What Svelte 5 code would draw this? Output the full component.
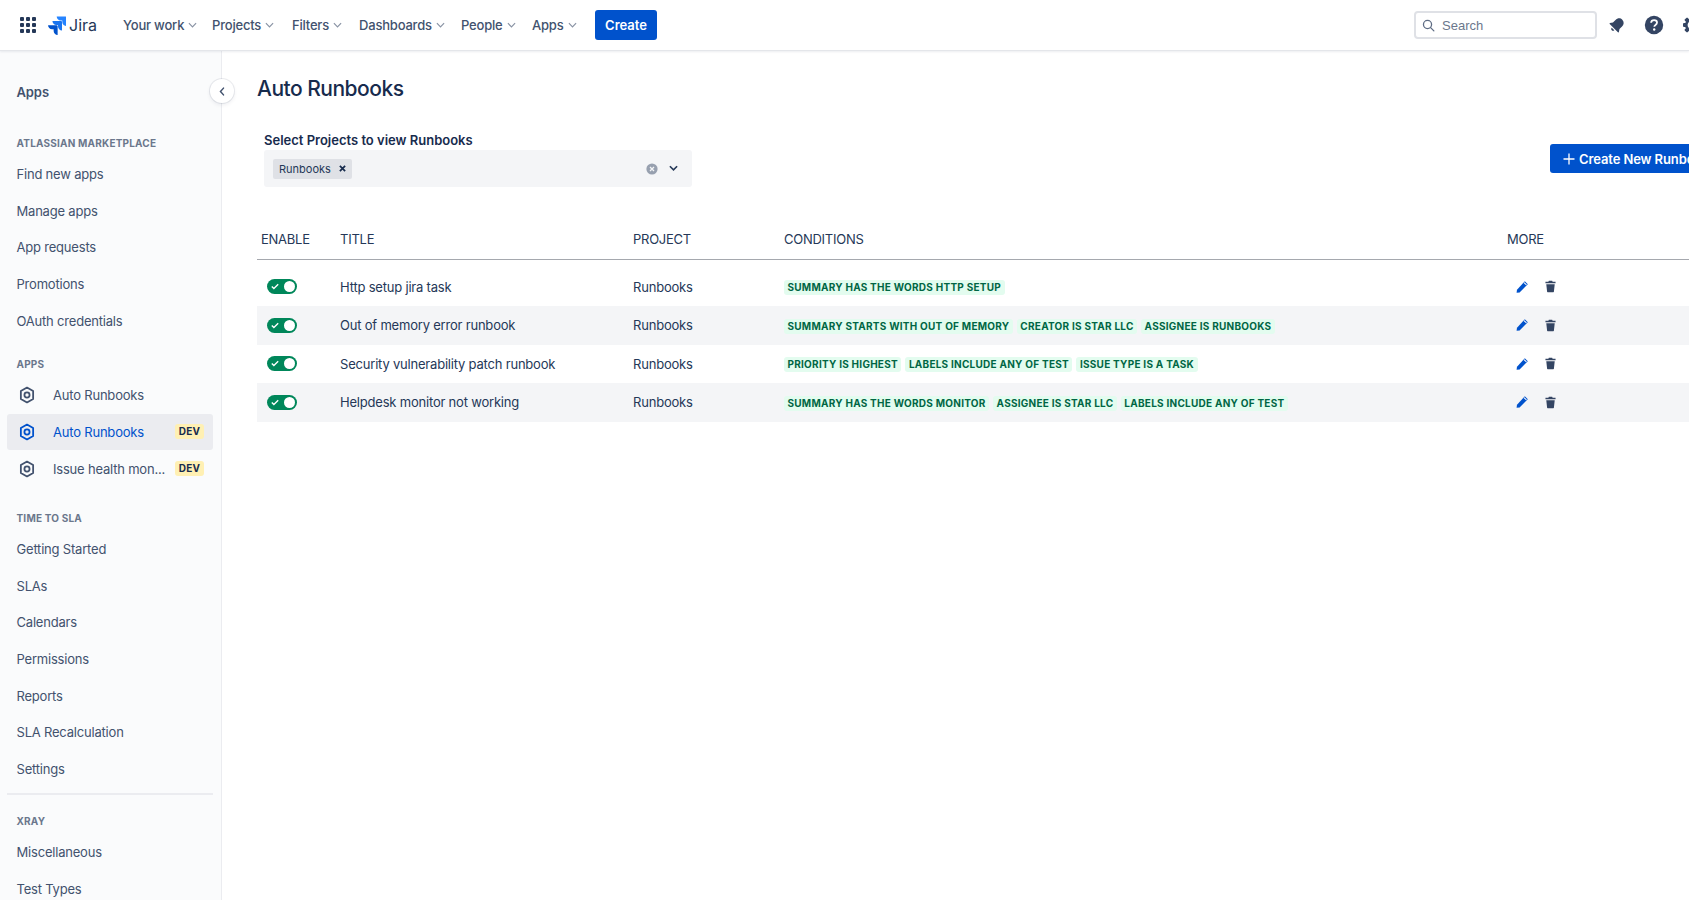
<script>
	const navItems = [
		{ label: 'Your work', width: 89 },
		{ label: 'Projects', width: 80 },
		{ label: 'Filters', width: 67 },
		{ label: 'Dashboards', width: 102 },
		{ label: 'People', width: 71 },
		{ label: 'Apps', width: 63 }
	];

	const marketplace = ['Find new apps', 'Manage apps', 'App requests', 'Promotions', 'OAuth credentials'];
	const sla = ['Getting Started', 'SLAs', 'Calendars', 'Permissions', 'Reports', 'SLA Recalculation', 'Settings'];
	const xray = ['Miscellaneous', 'Test Types'];

	const apps = [
		{ name: 'Auto Runbooks', dev: false, active: false },
		{ name: 'Auto Runbooks', dev: true, active: true },
		{ name: 'Issue health mon...', dev: true, active: false }
	];

	const runbooks = [
		{
			title: 'Http setup jira task',
			conditions: ['Summary has the words http setup']
		},
		{
			title: 'Out of memory error runbook',
			conditions: ['Summary starts with out of memory', 'Creator is star llc', 'Assignee is runbooks']
		},
		{
			title: 'Security vulnerability patch runbook',
			conditions: ['Priority is highest', 'Labels include any of test', 'Issue type is a task']
		},
		{
			title: 'Helpdesk monitor not working',
			conditions: ['Summary has the words monitor', 'Assignee is star llc', 'Labels include any of test']
		}
	];
</script>

<div class="page">
	<header class="topbar">
		<button class="switcher" aria-label="Switch apps">
			<svg viewBox="0 0 16 16" width="16" height="16">
				{#each [0, 6, 12] as y}
					{#each [0, 6, 12] as x}
						<rect {x} {y} width="4" height="4" rx="1" fill="#253858" />
					{/each}
				{/each}
			</svg>
		</button>
		<div class="logo">
			<svg viewBox="0 0 20 20" width="19" height="19">
				<path fill="#2684ff" d="M19.4 0.6H10.2c0 2.3 1.9 4.2 4.2 4.2h1.7v1.6c0 2.3 1.9 4.2 4.2 4.2V1.5c0-.5-.4-.9-.9-.9z" />
				<path fill="#1a75f0" d="M14.8 5.2H5.7c0 2.3 1.9 4.2 4.2 4.2h1.7V11c0 2.3 1.9 4.2 4.2 4.2V6.1c0-.5-.4-.9-1-.9z" />
				<path fill="#0052cc" d="M10.3 9.8H1.1c0 2.3 1.9 4.2 4.2 4.2H7v1.7c0 2.3 1.9 4.2 4.2 4.2v-9.2c0-.5-.4-.9-.9-.9z" />
			</svg>
			<span>Jira</span>
		</div>
		<nav class="nav">
			{#each navItems as item}
				<div class="nav-item" style="width: {item.width}px">
					{item.label}
					<svg viewBox="0 0 10 6" width="9" height="6"><path d="M1 1l4 4 4-4" fill="none" stroke="#8993a4" stroke-width="1.3" /></svg>
				</div>
			{/each}
		</nav>
		<button class="create">Create</button>
		<div class="search">
			<svg viewBox="0 0 16 16" width="13" height="13">
				<circle cx="6.8" cy="6.8" r="5" fill="none" stroke="#5e6c84" stroke-width="1.6" />
				<path d="M10.6 10.6l4 4" stroke="#5e6c84" stroke-width="1.6" stroke-linecap="round" />
			</svg>
			<span>Search</span>
		</div>
		<button class="bar-icon bell" aria-label="Notifications">
			<svg viewBox="0 0 20 20" width="20" height="20">
				<g transform="rotate(45 10 10)" fill="#344563">
					<path d="M10 2.5c-2.9 0-4.6 2.2-4.6 5v3.6L3.7 13.6c-.2.4 0 .9.5.9h11.6c.5 0 .7-.5.5-.9l-1.7-2.5V7.5c0-2.8-1.7-5-4.6-5z" />
					<path d="M8.2 15.6h3.6c0 1-.8 1.8-1.8 1.8s-1.8-.8-1.8-1.8z" />
				</g>
			</svg>
		</button>
		<button class="bar-icon help" aria-label="Help">
			<svg viewBox="0 0 20 20" width="20" height="20">
				<circle cx="10" cy="10" r="9.2" fill="#344563" />
				<path d="M7.1 7.8c.1-1.6 1.3-2.6 3-2.6s2.9 1 2.9 2.4c0 1.2-.7 1.8-1.5 2.3-.8.5-1.2.9-1.2 1.8" fill="none" stroke="#fff" stroke-width="1.8" />
				<circle cx="10.2" cy="14.5" r="1.2" fill="#fff" />
			</svg>
		</button>
		<button class="bar-icon gear" aria-label="Settings">
			<svg viewBox="0 0 20 20" width="20" height="20">
				{#each [0, 45, 90, 135] as angle}
					<rect x="8" y="1" width="4" height="18" rx="1" fill="#344563" transform="rotate({angle} 10 10)" />
				{/each}
				<circle cx="10" cy="10" r="7" fill="#344563" />
				<circle cx="10" cy="10" r="4.4" fill="#fff" />
			</svg>
		</button>
	</header>

	<div class="body">
		<aside class="sidebar">
			<div class="side-title">Apps</div>

			<div class="group-label first">Atlassian Marketplace</div>
			{#each marketplace as item}
				<div class="side-item">{item}</div>
			{/each}

			<div class="group-label apps-label">Apps</div>
			{#each apps as app}
				<div class="side-item app" class:active={app.active}>
					<svg viewBox="0 0 18 20" width="16" height="18">
						<path d="M9 1.6l6.9 4v8.8L9 18.4l-6.9-4V5.6z" fill="none" stroke="currentColor" stroke-width="2" stroke-linejoin="round" />
						<circle cx="9" cy="10" r="2.9" fill="none" stroke="currentColor" stroke-width="2" />
					</svg>
					<span class="app-name">{app.name}</span>
					{#if app.dev}
						<span class="dev">DEV</span>
					{/if}
				</div>
			{/each}

			<div class="group-label sla-label">Time to SLA</div>
			{#each sla as item}
				<div class="side-item">{item}</div>
			{/each}

			<div class="divider"></div>

			<div class="group-label">Xray</div>
			{#each xray as item}
				<div class="side-item">{item}</div>
			{/each}
		</aside>

		<button class="collapse" aria-label="Collapse sidebar">
			<svg viewBox="0 0 8 12" width="6" height="9"><path d="M6 1.5L2 6l4 4.5" fill="none" stroke="#42526e" stroke-width="2" stroke-linecap="round" /></svg>
		</button>

		<main class="main">
			<h1>Auto Runbooks</h1>

			<div class="filter-row">
				<div class="filter">
					<div class="filter-label">Select Projects to view Runbooks</div>
					<div class="select">
						<span class="tag">Runbooks
							<svg viewBox="0 0 8 8" width="7" height="7"><path d="M1 1l6 6M7 1L1 7" stroke="#172b4d" stroke-width="2" /></svg>
						</span>
						<svg class="clear" viewBox="0 0 12 12" width="12" height="12">
							<circle cx="6" cy="6" r="5.6" fill="#97a0af" />
							<path d="M4 4l4 4M8 4l-4 4" stroke="#f4f5f7" stroke-width="1.3" />
						</svg>
						<svg class="chevron" viewBox="0 0 10 7" width="9" height="7"><path d="M1 1l4 4 4-4" fill="none" stroke="#253858" stroke-width="1.8" /></svg>
					</div>
				</div>
				<button class="new-btn">
					<svg viewBox="0 0 12 12" width="12" height="12"><path d="M6 0.5v11M0.5 6h11" stroke="#fff" stroke-width="1.3" /></svg>
					Create New Runbook
				</button>
			</div>

			<table class="runbooks">
				<colgroup>
					<col style="width: 79px" />
					<col style="width: 293px" />
					<col style="width: 151px" />
					<col style="width: 723px" />
					<col style="width: 186px" />
				</colgroup>
				<thead>
					<tr>
						<th>ENABLE</th>
						<th>TITLE</th>
						<th>PROJECT</th>
						<th>CONDITIONS</th>
						<th>MORE</th>
					</tr>
				</thead>
				<tbody>
					{#each runbooks as runbook}
						<tr>
							<td>
								<span class="toggle">
									<svg viewBox="0 0 10 8" width="8" height="7"><path d="M1 4l2.6 2.6L9 1.2" fill="none" stroke="#fff" stroke-width="1.7" /></svg>
									<i></i>
								</span>
							</td>
							<td>{runbook.title}</td>
							<td>Runbooks</td>
							<td>
								<div class="conditions">
									{#each runbook.conditions as condition}
										<span class="lozenge">{condition}</span>
									{/each}
								</div>
							</td>
							<td>
								<div class="actions">
									<svg viewBox="0 0 14 14" width="14" height="14">
										<path fill="#0052cc" d="M9.8 1.2l3 3-8.2 8.2-3 .4.4-3z" />
										<path fill="#fff" d="M8.7 2.9l.7-.7 2.4 2.4-.7.7z" />
									</svg>
									<svg viewBox="0 0 12 14" width="11" height="13">
										<path fill="#344563" d="M4.2 0.8h3.6l.5 1H11.5v1.6H.5V1.8h3.2zM1.4 4.6h9.2l-.9 8.1c0 .3-.3.5-.6.5H2.9c-.3 0-.6-.2-.6-.5z" />
									</svg>
								</div>
							</td>
						</tr>
					{/each}
				</tbody>
			</table>
		</main>
	</div>
</div>

<style>
	:global(body) {
		margin: 0;
		background: #fff;
		font-family: Inter, "Noto Sans", sans-serif;
		color: #172b4d;
	}

	button {
		border: none;
		background: none;
		padding: 0;
		font: inherit;
	}

	.page {
		width: 1689px;
		height: 900px;
		overflow: hidden;
		display: flex;
		flex-direction: column;
	}

	/* Top bar */
	.topbar {
		flex: 0 0 51px;
		box-sizing: border-box;
		display: flex;
		align-items: center;
		border-bottom: 1px solid #e4e6ea;
		box-shadow: 0 1px 2px rgba(9, 30, 66, 0.08);
		position: relative;
		z-index: 2;
		background: #fff;
	}

	.switcher {
		display: flex;
		margin-left: 20px;
	}

	.logo {
		display: flex;
		align-items: center;
		gap: 3px;
		margin-left: 11px;
		font-size: 16px;
		color: #253858;
	}

	.nav {
		display: flex;
		margin-left: 26px;
		font-size: 13px;
		letter-spacing: -0.2px;
		font-weight: 500;
		color: #42526e;
	}

	.nav-item {
		display: flex;
		align-items: center;
		gap: 4px;
		white-space: nowrap;
	}

	.create {
		width: 62px;
		height: 30px;
		background: #0052cc;
		color: #fff;
		border-radius: 3px;
		font-size: 13px;
		font-weight: 600;
	}

	.search {
		margin-left: auto;
		width: 183px;
		height: 28px;
		box-sizing: border-box;
		display: flex;
		align-items: center;
		gap: 7px;
		padding-left: 6px;
		border: 2px solid #dfe1e6;
		border-radius: 4px;
		font-size: 13px;
		color: #6b778c;
		font-family: "Liberation Sans", sans-serif;
	}

	.bar-icon {
		display: flex;
		flex: none;
	}

	.bell {
		margin-left: 10px;
	}

	.help {
		margin-left: 17px;
	}

	.gear {
		margin-left: 18px;
		margin-right: -13px;
	}

	/* Sidebar */
	.body {
		flex: 1;
		display: flex;
		position: relative;
		min-height: 0;
	}

	.sidebar {
		flex: 0 0 222px;
		box-sizing: border-box;
		background: #fafbfc;
		border-right: 1px solid #ebecf0;
		padding: 31px 8px 0 7px;
		overflow: hidden;
	}

	.side-title {
		height: 20px;
		line-height: 20px;
		padding-left: 9.5px;
		font-size: 13px;
		letter-spacing: -0.1px;
		font-weight: 600;
		color: #42526e;
	}

	.group-label {
		height: 16px;
		line-height: 16px;
		margin-bottom: 4.5px;
		padding-left: 9.5px;
		font-size: 10px;
		font-weight: 700;
		letter-spacing: 0.2px;
		text-transform: uppercase;
		color: #6b778c;
		white-space: nowrap;
	}

	.group-label.first {
		margin-top: 33px;
	}

	.group-label.apps-label {
		margin-top: 17.5px;
	}

	.group-label.sla-label {
		margin-top: 23px;
	}

	.side-item {
		height: 36.7px;
		box-sizing: border-box;
		display: flex;
		align-items: center;
		padding-left: 9.5px;
		font-size: 13px;
		letter-spacing: -0.2px;
		color: #42526e;
		border-radius: 3px;
	}

	.side-item.app {
		padding-left: 12px;
		padding-right: 9px;
	}

	.side-item.app svg {
		flex: none;
		margin-right: 18px;
	}

	.side-item.active {
		background: #ebecf0;
		color: #0052cc;
	}

	.app-name {
		flex: 1;
		min-width: 0;
		white-space: nowrap;
	}

	.dev {
		flex: none;
		width: 29px;
		height: 15px;
		margin-left: 8px;
		line-height: 15px;
		text-align: center;
		background: #fff0b3;
		color: #172b4d;
		border-radius: 3px;
		font-size: 10px;
		font-weight: 700;
		letter-spacing: 0.3px;
	}

	.divider {
		height: 2px;
		margin: 6px 0 18px;
		background: #ebecf0;
	}

	.collapse {
		position: absolute;
		left: 210px;
		top: 28px;
		width: 24px;
		height: 24px;
		display: flex;
		align-items: center;
		justify-content: center;
		background: #fff;
		border-radius: 50%;
		box-shadow: 0 0 0 1px rgba(9, 30, 66, 0.08), 0 2px 4px rgba(9, 30, 66, 0.08);
	}

	/* Main */
	.main {
		flex: 1;
		min-width: 0;
		padding: 0 0 0 35px;
	}

	h1 {
		margin: 24px 0 0;
		height: 28px;
		line-height: 28px;
		font-size: 21px;
		letter-spacing: -0.5px;
		font-weight: 500;
		color: #172b4d;
	}

	.filter-row {
		display: flex;
		align-items: flex-end;
		margin-top: 29px;
		padding-left: 7px;
	}

	.filter {
		flex: none;
		width: 428px;
	}

	.filter-label {
		height: 17px;
		line-height: 17px;
		font-size: 13px;
		font-weight: 600;
		color: #172b4d;
		white-space: nowrap;
	}

	.select {
		height: 37px;
		margin-top: 1px;
		display: flex;
		align-items: center;
		padding: 0 14px 0 9px;
		background: #f4f5f7;
		border-radius: 3px;
	}

	.tag {
		display: flex;
		align-items: center;
		gap: 8px;
		height: 20px;
		padding: 0 6px;
		background: #dfe1e6;
		border-radius: 2px;
		font-size: 11px;
		color: #253858;
	}

	.clear {
		margin-left: auto;
	}

	.chevron {
		margin-left: 11px;
	}

	.new-btn {
		flex: none;
		display: flex;
		align-items: center;
		gap: 4px;
		width: 165px;
		height: 29px;
		margin: 0 0 14px 858px;
		padding-left: 13px;
		box-sizing: border-box;
		background: #0052cc;
		color: #fff;
		border-radius: 3px;
		font-size: 13px;
		letter-spacing: -0.1px;
		font-weight: 600;
		white-space: nowrap;
	}

	/* Runbook table */
	.runbooks {
		width: 1432px;
		margin-top: 37px;
		table-layout: fixed;
		border-collapse: collapse;
		font-size: 13px;
		letter-spacing: -0.2px;
		color: #253858;
	}

	.runbooks th {
		height: 35px;
		padding: 0 0 4px 4px;
		box-sizing: border-box;
		text-align: left;
		font-weight: 400;
		font-size: 13px;
		letter-spacing: -0.25px;
		border-bottom: 1.5px solid #a5a8ae;
	}

	.runbooks thead + tbody::before {
		content: '';
		display: block;
		height: 8px;
	}

	.runbooks td {
		height: 38.5px;
		padding: 0 0 0 4px;
	}

	.runbooks tbody tr:nth-child(even) {
		background: #f4f5f7;
	}

	.toggle {
		position: relative;
		display: flex;
		align-items: center;
		width: 30px;
		height: 15px;
		margin-left: 6px;
		padding-left: 4px;
		box-sizing: border-box;
		background: #00875a;
		border-radius: 8px;
	}

	.toggle i {
		position: absolute;
		right: 2px;
		top: 2px;
		width: 11px;
		height: 11px;
		background: #fff;
		border-radius: 50%;
	}

	.conditions {
		display: flex;
		gap: 4px;
		padding-top: 2px;
	}

	.lozenge {
		height: 15px;
		line-height: 15px;
		padding: 0 3.5px;
		background: #e3fcef;
		color: #006644;
		border-radius: 3px;
		font-size: 10px;
		font-weight: 700;
		letter-spacing: 0.25px;
		text-transform: uppercase;
		white-space: nowrap;
	}

	.actions {
		display: flex;
		align-items: center;
		gap: 16px;
		margin-left: 8px;
	}
</style>
